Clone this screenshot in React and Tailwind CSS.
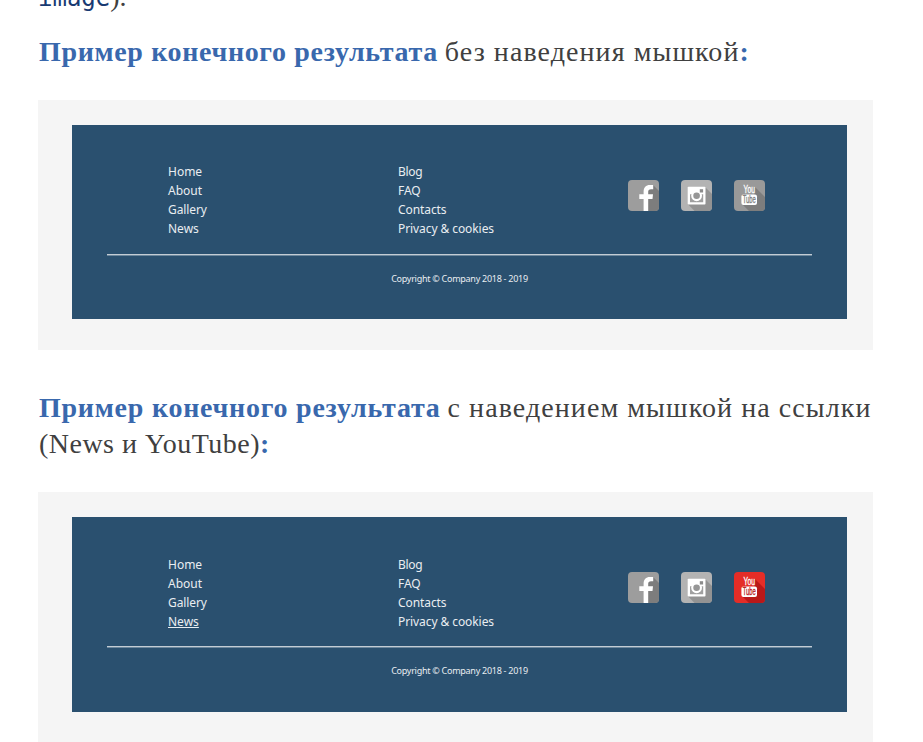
import React from "react";

function FacebookIcon() {
  return (
    <svg className="block size-[31px]" viewBox="0 0 31 31" aria-label="Facebook">
      <defs>
        <clipPath id="fb-tile"><rect width="31" height="31" rx="4" /></clipPath>
      </defs>
      <g clipPath="url(#fb-tile)">
        <rect width="31" height="31" fill="#9d9d9d" />
        <path d="M25 5 31 11V31H17V12Z" fill="#7d7d7d" />
        <path d="M15.6 31V18.9H11.3V14.2H15.6V11.7C15.6 7.2 18 4.9 21.8 4.9H25.2V9.2H23C21 9.2 20.2 10.1 20.2 11.7V14.2H25L24.5 18.9H20.2V31Z" fill="#fff" />
      </g>
    </svg>
  );
}

function InstagramIcon() {
  return (
    <svg className="block size-[31px]" viewBox="0 0 31 31" aria-label="Instagram">
      <defs>
        <clipPath id="ig-tile"><rect width="31" height="31" rx="4" /></clipPath>
      </defs>
      <g clipPath="url(#ig-tile)">
        <rect width="31" height="31" fill="#b3b3b3" />
        <path d="M24 7 31 14V31H13.5L7 24.3Z" fill="#939393" />
        <rect x="6.7" y="6.8" width="17.8" height="17.7" rx="0.8" fill="#fff" />
        <path d="M9 14.2H22.2V22.2H9Z" fill="#a0a0a0" />
        <circle cx="15.6" cy="15.8" r="5.4" fill="#fff" />
        <circle cx="15.6" cy="15.8" r="3.3" fill="#969696" />
        <rect x="18.8" y="9.2" width="3.3" height="3.3" fill="#8c8c8c" />
      </g>
    </svg>
  );
}

function YouTubeIcon({ active }) {
  const base = active ? "#e52d27" : "#999999";
  const shade = active ? "#b91819" : "#7d7d7d";
  const clip = active ? "yt-tile-active" : "yt-tile";
  return (
    <svg className="block size-[31px]" viewBox="0 0 31 31" aria-label="YouTube">
      <defs>
        <clipPath id={clip}><rect width="31" height="31" rx="4" /></clipPath>
      </defs>
      <g clipPath={`url(#${clip})`}>
        <rect width="31" height="31" fill={base} />
        <path d="M20 6 31 17V31H15L8.5 24.5V15H20Z" fill={shade} />
        <rect x="7.4" y="14.6" width="15.6" height="10.4" rx="2" fill="#fff" />
        <g fontFamily="'Liberation Sans Narrow', 'Liberation Sans', sans-serif" fontWeight="400" textAnchor="middle" strokeWidth="0.3">
          <text x="15.3" y="13.1" fontSize="10.5" textLength="11.5" lengthAdjust="spacingAndGlyphs" fill="#fff" stroke="#fff">You</text>
          <text x="15.2" y="23.4" fontSize="10" textLength="13" lengthAdjust="spacingAndGlyphs" fill={shade} stroke={shade}>Tube</text>
        </g>
      </g>
    </svg>
  );
}

function FooterExample({ hovered = false }) {
  return (
    <section className="ml-[38px] h-[250px] w-[835px] bg-[#f5f5f5] pt-[25px] pl-[34px]">
      <footer
        className={`w-[775px] bg-[#2a506f] font-['Noto_Sans','Open_Sans',sans-serif] text-[#e9edf1] ${
          hovered ? "h-[195px] pt-[37.5px]" : "h-[194px] pt-[37px]"
        }`}
      >
        <div className="flex h-[91.5px] pl-[96px] text-[12px] leading-[19.1px]">
          <ul className="w-[230px] shrink-0">
            <li>Home</li>
            <li>About</li>
            <li className="tracking-[-0.1px]">Gallery</li>
            <li><span className={hovered ? "underline underline-offset-1" : ""}>News</span></li>
          </ul>
          <ul className="w-[230px] shrink-0 tracking-[-0.08px]">
            <li className="tracking-[-0.3px]">Blog</li>
            <li>FAQ</li>
            <li>Contacts</li>
            <li>Privacy &amp; cookies</li>
          </ul>
          <div className="flex gap-[22px] pt-[17.5px]">
            <FacebookIcon />
            <InstagramIcon />
            <YouTubeIcon active={hovered} />
          </div>
        </div>
        <div className="mx-[35px] h-[2px] border-t border-[#c3ccd4] bg-[#6d889d]" />
        <p className="mt-[16px] text-center text-[9px] leading-[14px] tracking-[-0.27px]">Copyright © Company 2018 - 2019</p>
      </footer>
    </section>
  );
}

export default function App() {
  return (
    <main className="h-[742px] w-[923px] overflow-hidden bg-white font-['Liberation_Serif',serif] text-[28px] text-[#404040]">
      <div className="flex h-[34px] items-start pl-[38px] whitespace-nowrap">
        <p className="-mt-[19px] leading-[32px]">
          <span className="font-['DejaVu_Sans_Mono',monospace] text-[24px] text-[#183a72]">image</span>).
        </p>
      </div>
      <p className="h-[66px] pl-[39px] leading-[36px] whitespace-nowrap">
        <strong className="tracking-[0.66px] text-[#3968ad]">Пример конечного результата</strong>{" "}
        <span className="tracking-[1.08px]">без наведения мышкой</span><strong className="text-[#3968ad]">:</strong>
      </p>
      <FooterExample />
      <div className="h-[142px] pt-[40px] pl-[39px] leading-[36px] whitespace-nowrap">
        <p>
          <strong className="tracking-[0.76px] text-[#3968ad]">Пример конечного результата</strong>{" "}
          <span className="tracking-[1.08px]">с наведением мышкой на ссылки</span>
        </p>
        <p><span className="tracking-[0.48px]">(News и YouTube)</span><strong className="text-[#3968ad]">:</strong></p>
      </div>
      <FooterExample hovered />
    </main>
  );
}
